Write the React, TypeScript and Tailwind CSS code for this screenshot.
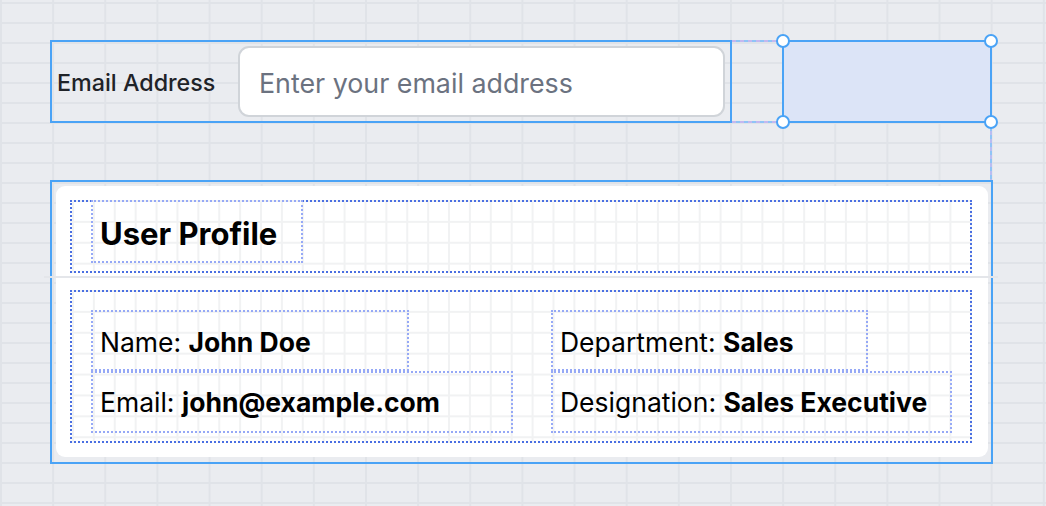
const cardGrid =
  "bg-[linear-gradient(to_right,#f1f2f3_2px,transparent_2px),linear-gradient(to_bottom,#f1f2f3_2px,transparent_2px)] bg-[size:20.9px_20.9px] bg-[position:0px_-2px]";

function Field({ label, value, w }: { label: string; value: string; w: string }) {
  return (
    <div className={`${w} border-2 border-dotted border-[#96a9f6] flex items-center pl-[7px] text-[26.5px] text-black leading-none whitespace-nowrap`}>
      <span>{label}&nbsp;</span>
      <span className="font-bold">{value}</span>
    </div>
  );
}

export default function App() {
  return (
    <div className="w-[1046px] h-[506px] overflow-hidden bg-[#eaecf0] bg-[linear-gradient(to_right,#e0e3e8_2px,transparent_2px),linear-gradient(to_bottom,#e0e3e8_2px,transparent_2px)] bg-[size:52.15px_20px] bg-[position:0px_2px] font-[Inter,sans-serif] pl-[50px] pt-[40px]">
      <div className="w-[943px]">
        {/* top row */}
        <div className="flex items-start">
          <div className="w-[682px] h-[83px] border-2 border-[#4aa3f6] flex items-center pl-[5px] pr-[5px]">
            <label className="w-[181px] shrink-0 pt-[3px] text-[23.3px] font-medium text-[#1f2328] leading-none whitespace-nowrap">
              Email Address
            </label>
            <div className="w-[487px] h-[71px] bg-white border-2 border-[#d0d4d9] rounded-[11px] flex items-center pl-[19px] pt-[4px] text-[26.8px] text-[#6b7280] leading-none whitespace-nowrap">
              Enter your email address
            </div>
          </div>
          <div className="w-[50px] h-[83px] flex flex-col justify-between">
            <div className="h-[2px] bg-[repeating-linear-gradient(90deg,#c3b8f0_0px,#c3b8f0_4px,#8fc4f6_4px,#8fc4f6_8px)]" />
            <div className="h-[2px] bg-[repeating-linear-gradient(90deg,#c3b8f0_0px,#c3b8f0_4px,#8fc4f6_4px,#8fc4f6_8px)]" />
          </div>
          <div className="relative w-[210px] h-[83px] border-2 border-[#4aa3f6] bg-[#dce4f7]">
            <span className="absolute -top-[8px] -left-[8px] w-[14px] h-[14px] rounded-full bg-white border-2 border-[#4aa3f6]" />
            <span className="absolute -top-[8px] -right-[8px] w-[14px] h-[14px] rounded-full bg-white border-2 border-[#4aa3f6]" />
            <span className="absolute -bottom-[8px] -left-[8px] w-[14px] h-[14px] rounded-full bg-white border-2 border-[#4aa3f6]" />
            <span className="absolute -bottom-[8px] -right-[8px] w-[14px] h-[14px] rounded-full bg-white border-2 border-[#4aa3f6]" />
          </div>
        </div>

        {/* vertical connector */}
        <div className="ml-[940px] w-[2px] h-[57px] bg-[repeating-linear-gradient(180deg,#b9bdf2_0px,#b9bdf2_4px,#8fc4f6_4px,#8fc4f6_8px)]" />

        {/* card selection */}
        <div className="w-[943px] h-[284px] border-2 border-[#4aa3f6] pt-[4px] pl-[4px] pr-[3px] pb-[5px]">
          <div className="h-full bg-white rounded-[9px] pt-[14px] pl-[14px] pr-[16px] pb-[14px]">
            <div className={`h-[73px] border-2 border-dotted border-[#4a6fe2] ${cardGrid}`}>
              <div className="-mt-[2px] ml-[19px] w-[212px] h-[63px] border-2 border-dotted border-[#96a9f6] flex items-center pl-[7px] pt-[4px] text-[31px] font-bold text-black leading-none whitespace-nowrap">
                User Profile
              </div>
            </div>
            <div className="mt-[3px] -mx-[26px] h-[2px] bg-[#e4e6ea]" />
            <div className={`mt-[12px] h-[153px] border-2 border-dotted border-[#4a6fe2] pt-[18px] pl-[19px] grid grid-cols-[460px_1fr] ${cardGrid}`}>
              <div className="flex flex-col">
                <Field label="Name:" value="John Doe" w="w-[318px] h-[61px] pt-[4px]" />
                <Field label="Email:" value="john@example.com" w="w-[422px] h-[62px] pt-[1px]" />
              </div>
              <div className="flex flex-col">
                <Field label="Department:" value="Sales" w="w-[317px] h-[61px] pt-[4px]" />
                <Field label="Designation:" value="Sales Executive" w="w-[401px] h-[62px] pt-[1px]" />
              </div>
            </div>
          </div>
        </div>
      </div>
    </div>
  );
}
